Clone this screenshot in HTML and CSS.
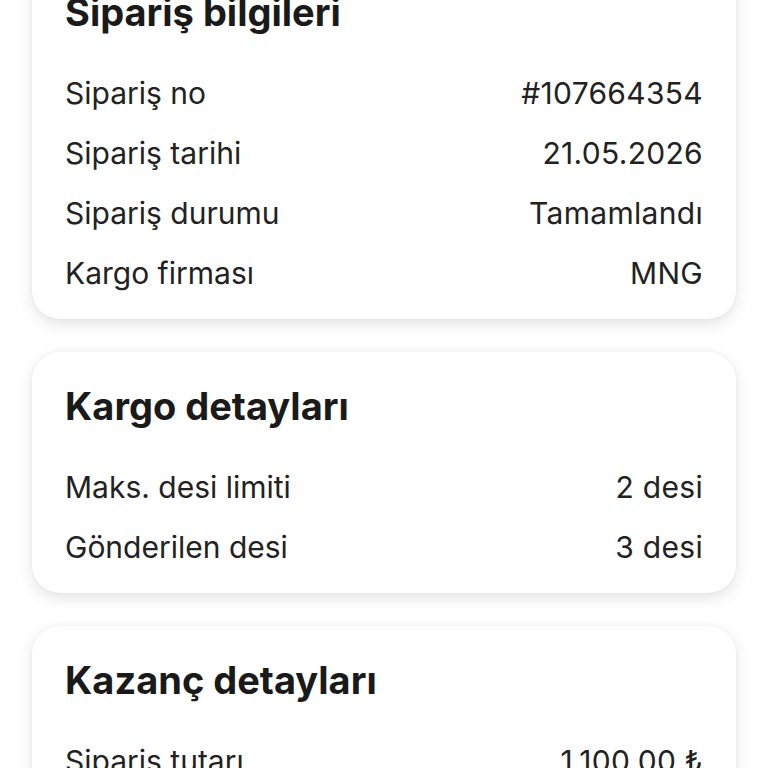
FILE: index.html
```html
<!DOCTYPE html>
<html lang="tr">
<head>
<meta charset="utf-8">
<title>Sipariş detayı</title>
<link rel="stylesheet" href="styles.css">
</head>
<body>
<div class="page">
	<div class="card">
		<h2 class="card_title">Sipariş bilgileri</h2>
		<div class="row"><span>Sipariş no</span><span>#107664354</span></div>
		<div class="row"><span>Sipariş tarihi</span><span>21.05.2026</span></div>
		<div class="row"><span>Sipariş durumu</span><span>Tamamlandı</span></div>
		<div class="row"><span>Kargo firması</span><span>MNG</span></div>
	</div>

	<div class="card">
		<h2 class="card_title">Kargo detayları</h2>
		<div class="row"><span>Maks. desi limiti</span><span>2 desi</span></div>
		<div class="row"><span>Gönderilen desi</span><span>3 desi</span></div>
	</div>

	<div class="card">
		<h2 class="card_title">Kazanç detayları</h2>
		<div class="row"><span>Sipariş tutarı</span><span>1.100,00 ₺</span></div>
		<div class="row"><span>Komisyon</span><span>110,00 ₺</span></div>
	</div>
</div>
</body>
</html>
```

FILE: styles.css
```css
*{margin:0;padding:0;box-sizing:border-box;}
body{background:#fff;font-family:Inter,"Noto Sans",sans-serif;color:#222;overflow:hidden;height:768px;}
.page{display:flex;flex-direction:column;gap:33px;padding:0 32px;margin-top:-42px;}
.card{background:#fff;border-radius:28px;box-shadow:0 5px 16px rgba(0,0,0,0.11),0 0 4px rgba(0,0,0,0.04);padding:31px 33px 16px;}
.card_title{font-size:38px;font-weight:700;line-height:46px;color:#1a1a1a;margin-bottom:28px;}
.row{display:flex;justify-content:space-between;align-items:center;height:60px;font-size:30px;font-weight:400;}
.row span:last-child{letter-spacing:0.3px;}
```
